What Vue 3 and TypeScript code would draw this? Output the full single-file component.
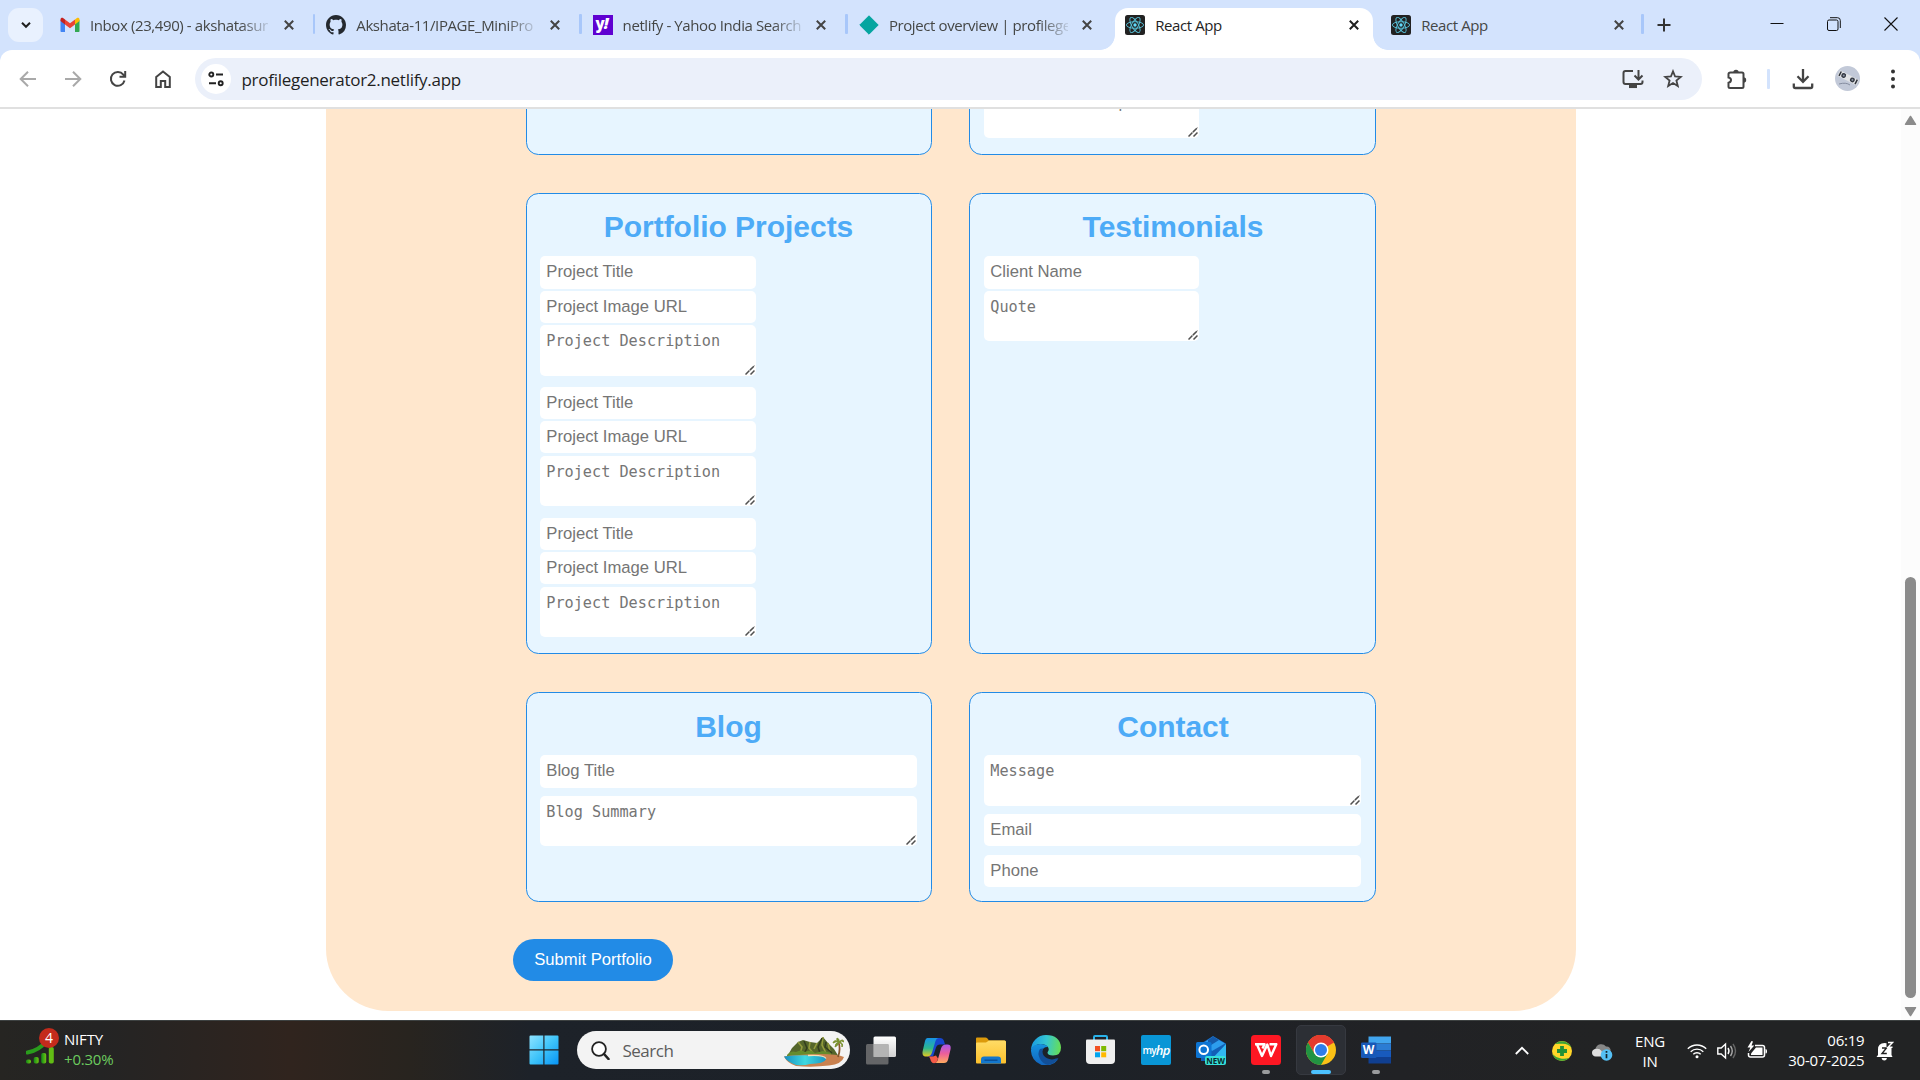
<script setup lang="ts">
interface Tab {
  title: string
  icon: 'gmail' | 'github' | 'yahoo' | 'netlify' | 'react'
  active?: boolean
  fade?: boolean
  sep?: boolean
}

const tabs: Tab[] = [
  { title: 'Inbox (23,490) - akshatasur', icon: 'gmail', fade: true, sep: true },
  { title: 'Akshata-11/IPAGE_MiniPro', icon: 'github', fade: true, sep: true },
  { title: 'netlify - Yahoo India Search', icon: 'yahoo', fade: true, sep: true },
  { title: 'Project overview | profilege', icon: 'netlify', fade: true },
  { title: 'React App', icon: 'react', active: true },
  { title: 'React App', icon: 'react', sep: true },
]

interface Field {
  label: string
  area?: boolean
}

interface Card {
  title?: string
  wide?: boolean
  height: number
  groups: Field[][]
}

const project: Field[] = [
  { label: 'Project Title' },
  { label: 'Project Image URL' },
  { label: 'Project Description', area: true },
]

const cards: Card[] = [
  { height: 461, groups: [] },
  { height: 461, groups: [[{ label: 'Service Description', area: true }]] },
  { title: 'Portfolio Projects', height: 461, groups: [project, project, project] },
  {
    title: 'Testimonials',
    height: 461,
    groups: [[{ label: 'Client Name' }, { label: 'Quote', area: true }]],
  },
  {
    title: 'Blog',
    wide: true,
    height: 210,
    groups: [[{ label: 'Blog Title' }, { label: 'Blog Summary', area: true }]],
  },
  {
    title: 'Contact',
    wide: true,
    height: 210,
    groups: [[{ label: 'Message', area: true }, { label: 'Email' }, { label: 'Phone' }]],
  },
]
</script>

<template>
  <div class="screen">
    <header class="tabstrip">
      <button class="tabsearch">
        <svg width="12" height="12" viewBox="0 0 12 12"><path d="M2 3.8 6 7.8 10 3.8" fill="none" stroke="#1f1f1f" stroke-width="2" /></svg>
      </button>
      <div v-for="(t, i) in tabs" :key="i" class="tab" :class="{ active: t.active }">
        <svg v-if="t.icon === 'gmail'" class="fav" viewBox="0 0 20 20">
          <path d="M.5 5v11.2c0 .5.4.8.8.8H5V8.500z" fill="#4285f4" />
          <path d="M15 17h3.700c.5 0 .8-.4.8-.8V5L15 8.500z" fill="#34a853" />
          <path d="M15 4.500v5l4.500-3.400V4.500c0-1.700-1.700-2.200-2.900-1.300z" fill="#fbbc04" />
          <path d="M5 9.500v-5l5 3.800 5-3.800v5l-5 3.800z" fill="#ea4335" />
          <path d="M.5 4.500v1.600L5 9.500v-5L3.400 3.200C2.200 2.300.5 2.800.5 4.500z" fill="#c5221f" />
        </svg>
        <svg v-else-if="t.icon === 'github'" class="fav" viewBox="0 0 16 16">
          <path fill="#24292f" d="M8 0C3.580 0 0 3.580 0 8c0 3.540 2.290 6.530 5.470 7.590.4.070.550-.170.550-.380 0-.190-.010-.820-.010-1.490-2.010.370-2.530-.490-2.690-.940-.090-.230-.480-.940-.820-1.130-.280-.150-.680-.520-.010-.530.630-.010 1.080.580 1.230.820.720 1.210 1.870.870 2.330.660.070-.520.280-.870.510-1.070-1.780-.2-3.640-.890-3.640-3.950 0-.870.310-1.590.820-2.150-.080-.2-.360-1.020.080-2.120 0 0 .670-.210 2.200.820.640-.180 1.320-.270 2-.270s1.360.090 2 .270c1.530-1.040 2.200-.820 2.200-.820.440 1.100.160 1.920.080 2.120.510.560.820 1.270.820 2.150 0 3.070-1.870 3.750-3.650 3.950.290.250.540.730.540 1.480 0 1.070-.010 1.930-.010 2.200 0 .210.150.460.550.380A8.010 8.010 0 0 0 16 8c0-4.420-3.580-8-8-8z" />
        </svg>
        <span v-else-if="t.icon === 'yahoo'" class="fav yahoo">y<i>!</i></span>
        <svg v-else-if="t.icon === 'netlify'" class="fav" viewBox="0 0 20 20">
          <path d="M10 .8 19.200 10 10 19.200.8 10z" fill="#05a5a0" stroke="#05a5a0" stroke-width="1" stroke-linejoin="round" />
        </svg>
        <svg v-else class="fav" viewBox="0 0 20 20">
          <rect width="20" height="20" rx="2.500" fill="#222" />
          <g fill="none" stroke="#58c4dc" stroke-width=".9">
            <ellipse cx="10" cy="10" rx="8.600" ry="3.300" />
            <ellipse cx="10" cy="10" rx="8.600" ry="3.300" transform="rotate(60 10 10)" />
            <ellipse cx="10" cy="10" rx="8.600" ry="3.300" transform="rotate(120 10 10)" />
          </g>
          <circle cx="10" cy="10" r="1.700" fill="#61dafb" />
        </svg>
        <span class="tabtitle" :class="{ fade: t.fade }">{{ t.title }}</span>
        <svg class="x" viewBox="0 0 10 10"><path d="M.8.8l8.400 8.400M9.200.8.8 9.200" /></svg>
        <i v-if="t.sep" class="tabsep"></i>
      </div>
      <svg class="plus" width="14" height="14" viewBox="0 0 14 14"><path d="M7 .5v13M.5 7h13" stroke="#333" stroke-width="2" /></svg>
      <div class="winctl">
        <svg width="14" height="14" viewBox="0 0 14 14"><path d="M.5 6.500h13" stroke="#111" /></svg>
        <svg width="14" height="14" viewBox="0 0 14 14" fill="none" stroke="#111"><rect x=".5" y="3" width="10.500" height="10.500" rx="1.500" /><path d="M3 .7h7.500q2.800 0 2.800 2.800V11" /></svg>
        <svg width="14" height="14" viewBox="0 0 14 14"><path d="M.5.5l13 13M13.500.5l-13 13" stroke="#111" stroke-width="1.100" /></svg>
      </div>
    </header>

    <div class="toolbar">
      <div class="nav">
        <svg viewBox="0 0 18 18" stroke="#a9a9a9"><path d="M17 9H2M9 1.700 1.700 9 9 16.300" /></svg>
        <svg viewBox="0 0 18 18" stroke="#a9a9a9"><path d="M1 9h15M9 1.700 16.300 9 9 16.300" /></svg>
        <svg viewBox="0 0 18 18" stroke="#444"><path d="M15.500 10.500A6.900 6.900 0 1 1 14.300 4.700L16 6.500M16.200 1v5.800h-5.700" /></svg>
        <svg viewBox="0 0 18 18" stroke="#444"><path d="M2.200 7 9 1.500 15.800 7v10h-4.600v-6H6.800v6H2.200z" /></svg>
      </div>
      <div class="omnibox">
        <span class="chip">
          <svg width="16" height="16" viewBox="0 0 16 16" fill="none" stroke="#222" stroke-width="1.900"><circle cx="3.300" cy="3.500" r="2" /><path d="M8 3.500h7M1 12.300h7" /><circle cx="12.700" cy="12.300" r="2" /></svg>
        </span>
        <span class="url">profilegenerator2.netlify.app</span>
        <svg class="install" width="22" height="20" viewBox="0 0 22 20" fill="none" stroke="#444" stroke-width="2"><path d="M11 2H3.500Q1.500 2 1.500 4v9q0 2 2 2h15q2 0 2-2v-1.500M16.500 1v9M12.500 6.500l4 4 4-4" /><path d="M7 17.300h8" stroke-width="3.500" /></svg>
        <svg width="20" height="20" viewBox="0 0 20 20" fill="none" stroke="#444" stroke-width="1.800"><path d="M10 2.300 12.100 7.500 17.700 7.900 13.400 11.500 14.800 17 10 14 5.200 17 6.600 11.500 2.300 7.900 7.900 7.500z" /></svg>
      </div>
      <div class="actions">
        <svg width="22" height="22" viewBox="0 0 22 22"><path d="M4.500 4.500H16q1.500 0 1.500 1.500v12.500q0 1.500-1.500 1.500H4q-1.500 0-1.500-1.500v-3.700q2.500-.5 2.500-2.700T2.500 9.500V6q0-1.500 2-1.500z" fill="none" stroke="#444" stroke-width="2" /><path d="M7.300 4.500a2.700 2.700 0 0 1 5.400 0zM17.500 9.300a2.700 2.700 0 0 1 0 5.400z" fill="#444" /></svg>
        <i class="divider"></i>
        <svg class="dl" width="22" height="22" viewBox="0 0 22 22" fill="none" stroke="#444" stroke-width="2.300"><path d="M11 1v12.500M5.500 8.300l5.500 5.500 5.500-5.500M1.800 15.500v3q0 1.500 1.500 1.500h15.400q1.500 0 1.500-1.500v-3" /></svg>
        <svg class="avatar" width="25" height="25" viewBox="0 0 25 25"><circle cx="12.500" cy="12.500" r="12.500" fill="#c2c9d8" /><g transform="rotate(27 12.500 12)"><rect x="2.500" y="8.500" width="21" height="6" fill="#e2e4e6" /><path d="M4 9v5M22 9v5" stroke="#30343c" stroke-width="1.500" /><circle cx="8" cy="11.500" r="2.400" fill="#343943" /><circle cx="17.700" cy="11.500" r="2.400" fill="#343943" /><circle cx="8" cy="11.500" r="1" fill="#8c94a3" /><circle cx="17.700" cy="11.500" r="1" fill="#8c94a3" /></g><path d="M4 18q7-2 11 1" stroke="#858da0" fill="none" /></svg>
        <svg class="dots" width="4" height="20" viewBox="0 0 4 20" fill="#333"><circle cx="2" cy="2.500" r="2" /><circle cx="2" cy="10" r="2" /><circle cx="2" cy="17.500" r="2" /></svg>
      </div>
    </div>

    <div class="viewport">
      <main class="sheet">
        <form class="form" @submit.prevent>
          <div class="grid">
            <section v-for="(c, ci) in cards" :key="ci" class="card" :class="{ wide: c.wide, tail: !c.title }" :style="{ height: c.height + 'px' }">
              <h2 v-if="c.title">{{ c.title }}</h2>
              <div v-for="(g, gi) in c.groups" :key="gi" class="group">
                <template v-for="f in g" :key="f.label">
                  <div v-if="f.area" class="areawrap">
                    <textarea :placeholder="f.label"></textarea>
                    <svg class="grip" width="10" height="10" viewBox="0 0 10 10"><path d="M.5 9.500l9-9M5.500 9.500l4-4" stroke="#505050" stroke-width="1.500" stroke-dasharray="5.600 .6" /></svg>
                  </div>
                  <input v-else type="text" :placeholder="f.label" />
                </template>
              </div>
            </section>
          </div>
          <button class="submit" type="submit">Submit Portfolio</button>
        </form>
      </main>
      <div class="scrollbar">
        <svg width="13" height="11" viewBox="0 0 13 11"><path d="M6.500 1.500 11.500 9.300H1.500z" fill="#8b8b8b" stroke="#8b8b8b" stroke-width="1.500" stroke-linejoin="round" /></svg>
        <i class="thumb"></i>
        <svg width="13" height="11" viewBox="0 0 13 11"><path d="M6.500 9.500 11.500 1.700H1.500z" fill="#8b8b8b" stroke="#8b8b8b" stroke-width="1.500" stroke-linejoin="round" /></svg>
      </div>
    </div>

    <footer class="taskbar">
      <div class="widget">
        <div class="stock">
          <svg width="30" height="34" viewBox="0 0 30 34">
            <defs><linearGradient id="gr" x1="0" x2="1"><stop offset="0" stop-color="#128a17" /><stop offset="1" stop-color="#70c414" /></linearGradient></defs>
            <path d="M1.500 20.500Q13 18.500 20 9.500" stroke="#2a9c1c" stroke-width="4" fill="none" stroke-linecap="round" />
            <g fill="url(#gr)"><rect x="0" y="27.500" width="5" height="4" rx="1.800" /><rect x="7.700" y="25" width="5" height="6.500" rx="1.800" /><rect x="15.200" y="21" width="5" height="10.500" rx="1.800" /><rect x="22.800" y="15" width="5" height="16.500" rx="1.800" fill="#62bd14" /></g>
          </svg>
          <span class="badge">4</span>
        </div>
        <div class="quote"><span>NIFTY</span><span class="up">+0.30%</span></div>
      </div>

      <div class="dock">
        <div class="cell">
          <svg width="30" height="30" viewBox="0 0 30 30"><defs><linearGradient id="win" x1="0" y1="0" x2="1" y2="1"><stop offset="0" stop-color="#8ee3ff" /><stop offset=".5" stop-color="#3fc4fa" /><stop offset="1" stop-color="#0794f5" /></linearGradient></defs><path fill="url(#win)" d="M.5 1.500q0-1 1-1h12.800v13.800H.5zM15.500.5h13q1 0 1 1v12.800h-14zM.5 15.500h13.800v14H1.500q-1 0-1-1zM15.500 15.500h14v13q0 1-1 1h-13z" /></svg>
        </div>
        <div class="search">
          <svg width="19" height="19" viewBox="0 0 19 19" fill="none"><circle cx="8" cy="8" r="6.900" fill="#fff" stroke="#222" stroke-width="1.800" /><path d="M13 13l4.500 5" stroke="#222" stroke-width="2.600" stroke-linecap="round" /></svg>
          <span>Search</span>
          <svg class="island" width="60" height="30" viewBox="0 0 60 30">
            <defs><linearGradient id="sea" x1="0" x2="1"><stop offset="0" stop-color="#168fc0" /><stop offset=".5" stop-color="#3fd9e0" /><stop offset="1" stop-color="#1c97c4" /></linearGradient></defs>
            <path d="M4 18 8 11 14 5l5-2 7 2 7 1 6-6 5 6 6 6 5 8z" fill="#55662b" />
            <path d="M14 5l4 5-2 7M26 5l-1 6 4 5M39 0l-1 8 4 8M33 6l-3 6M44 6l2 9" stroke="#939b3d" stroke-width="1.600" fill="none" />
            <path d="M20 4l3 7-3 6M38 1l-4 9 2 6M42 5l-1 5 7 6" stroke="#333d1e" stroke-width="1.500" fill="none" />
            <path d="M3 18q4-5 9-3 5-3 9 0 6-3 10 1l8-2 8 2v3H3z" fill="#668b2c" />
            <path d="M0 19.500q12-2 36-2.500 18 0 24 3-2 7-15 8.500-16 2-33 .5Q3 26 0 19.500z" fill="#c9814f" />
            <path d="M0 19.500q12-1.700 30-1 13 0 12 4-2 4-16 4.500-6 2-14 1Q3 25 0 19.500z" fill="url(#sea)" />
            <path d="M24 18.500q16-1 18 3" stroke="#f7e0b5" stroke-width="1.300" fill="none" />
            <path d="M54 20Q57 12 54.500 5" stroke="#87572c" stroke-width="1.800" fill="none" />
            <path d="M55 5q-5-3-6 1 3-2 6-1-4 1-4 5 3-1 4-5 4 2 3 5 2-4-3-5 3-2 5 0-1-4-5 0 1-3-2-4-1 3 2 4z" fill="#7b9130" stroke="#7b9130" />
          </svg>
        </div>
        <div class="cell">
          <svg width="30" height="29" viewBox="0 0 30 29"><defs><linearGradient id="tv" x1="0" y1="0" x2="0" y2="1"><stop offset="0" stop-color="#fff" /><stop offset="1" stop-color="#d2d2d2" /></linearGradient></defs><rect x="7.500" y=".5" width="22.500" height="20.500" rx="1.500" fill="url(#tv)" /><rect x="0" y="8" width="22.500" height="20.500" rx="1.500" fill="#777" fill-opacity=".8" /><path d="M7.500 8h15v13h-15z" fill="#b4b4b4" /></svg>
        </div>
        <div class="cell">
          <svg width="29" height="27" viewBox="0 0 29 27">
            <defs><linearGradient id="c1" x1="0" y1="0" x2="0" y2="1"><stop offset="0" stop-color="#1793e8" /><stop offset=".55" stop-color="#2cb890" /><stop offset="1" stop-color="#e5c91d" /></linearGradient><linearGradient id="c2" x1="0" y1="0" x2="0" y2="1"><stop offset="0" stop-color="#a957ed" /><stop offset=".5" stop-color="#ed5f99" /><stop offset="1" stop-color="#ffab5f" /></linearGradient></defs>
            <path d="M13 1h5q3 0 4 3l1 3.500h-5q-3 0-4 3l-3 9H5l6-15z" fill="#1746cf" />
            <path d="M5.500 1H17q-2.500 0-3.500 3L10 15.500Q8.800 19.500 5 19.500H3.500Q-.3 19 .7 14L3 4Q3.700 1 5.500 1z" fill="url(#c1)" />
            <path d="M24 7.500h1.500q4 0 3 5l-2.400 10q-.9 3.500-4.100 3.500H12q2.800 0 3.700-3L19 11.500q1.200-4 5-4z" fill="url(#c2)" />
            <path d="M6 19.500h5l3-1 2 3-1 3q-1 1.800-3 1.800t-3-2l-1-3q-.5-1.800-2-1.800z" fill="#f45a48" />
          </svg>
        </div>
        <div class="cell">
          <svg width="30" height="27" viewBox="0 0 30 27"><defs><linearGradient id="fo" x1="0" y1="0" x2="0" y2="1"><stop offset="0" stop-color="#ffdc66" /><stop offset="1" stop-color="#fcc02c" /></linearGradient></defs><path d="M0 1.500Q0 .5 1 .5h8.500q1 0 2 1L13 3.500h15.500Q30 3.500 30 5v8H0z" fill="#dc9a0b" /><path d="M0 6.500Q0 5.500 1 5.500h9l3-2h15.500Q30 3.500 30 5v20.500q0 1-1 1H1q-1 0-1-1z" fill="url(#fo)" /><path d="M5 26.500v-4q0-3 3-3h14q3 0 3 3v4z" fill="#1377cd" /><path d="M8.500 23.200h13" stroke="#0a4b91" stroke-width="1.300" /></svg>
        </div>
        <div class="cell">
          <svg width="30" height="30" viewBox="0 0 30 30">
            <defs><linearGradient id="e1" x1="0" y1=".4" x2="1" y2=".5"><stop offset="0" stop-color="#199be2" /><stop offset=".5" stop-color="#35c6d1" /><stop offset="1" stop-color="#67de54" /></linearGradient><linearGradient id="e2" x1="0" y1="0" x2="0" y2="1"><stop offset="0" stop-color="#1593df" /><stop offset="1" stop-color="#1264bd" /></linearGradient></defs>
            <path d="M0 15A15 15 0 0 1 15 0q14 0 15 12.500 0 8-8 8-5.500 0-5.500-3 2-2 1-4.500-2-4-8-4Q3 9.500 0 15z" fill="url(#e1)" />
            <path d="M0 15q1.500-6 9.500-6 5 0 7.500 3-4.500-.5-6 4-1 6 5 9.500 5 2.500 11-1A15 15 0 0 1 0 15z" fill="url(#e2)" />
            <path d="M9 14q-3 4 0 10 3 5 8 6 6-1 10.500-6.500-1-.5-5 .8-6.500.7-10-4-2-3.300 0-7z" fill="#124f98" />
          </svg>
        </div>
        <div class="cell">
          <svg class="store" width="29" height="30" viewBox="0 0 29 30"><path d="M8 6V2q0-1 1-1h11q1 0 1 1v4" fill="none" stroke="#29b2e9" stroke-width="2" /><path d="M0 5.500Q0 4.500 1 4.500h27q1 0 1 1V25q0 4-4 4H4q-4 0-4-4z" fill="#efefef" /><path d="M9 11h5v5.200H9z" fill="#f25022" /><path d="M15.200 11h5v5.200h-5z" fill="#7fba00" /><path d="M9 17.300h5v5H9z" fill="#00a4ef" /><path d="M15.200 17.300h5v5h-5z" fill="#ffb900" /></svg>
        </div>
        <div class="cell"><span class="hp"><span>my</span>hp</span></div>
        <div class="cell">
          <div class="outlook">
            <svg width="30" height="28" viewBox="0 0 30 28"><path d="M5 7.500 17 0l13 7.500V25H5z" fill="#125fb6" /><path d="M8 6.500 17 .5l12 7L16 15z" fill="#2d9ded" /><path d="M12 4 17 .5l6 3.500-11 7z" fill="#155aa9" /><path d="M30 8v17H14z" fill="#31b8f2" /><rect x="0" y="6" width="15.500" height="16" rx="1.500" fill="#0d74d2" /><circle cx="7.700" cy="13.700" r="4.300" fill="none" stroke="#fff" stroke-width="2" /></svg>
            <span class="new">NEW</span>
          </div>
        </div>
        <div class="cell">
          <svg width="30" height="30" viewBox="0 0 30 30"><rect width="30" height="30" rx="3.500" fill="#fd1723" /><path d="M4 9.200h9.500l-2 4.300M6 9.500l5 11.500 5.300-11.500 3.700 11.500 5.300-11.800H18.500" fill="none" stroke="#fff" stroke-width="2.400" stroke-linejoin="round" /></svg>
          <i class="ind"></i>
        </div>
        <div class="cell on">
          <svg width="30" height="30" viewBox="0 0 30 30"><circle cx="15" cy="15" r="15" fill="#fbc116" /><path d="M15 15 2 7.500A15 15 0 0 1 28 7.500z" fill="#e33b2e" /><path d="M15 7.500h13A15 15 0 0 0 2 7.500l6.500 11.300z" fill="#e33b2e" /><path d="M2 7.500A15 15 0 0 0 15 30l6.500-11.200H8.500z" fill="#229342" /><circle cx="15" cy="15" r="7.500" fill="#fff" /><circle cx="15" cy="15" r="6" fill="#2f7de9" /></svg>
          <i class="ind"></i>
        </div>
        <div class="cell">
          <div class="word">
            <svg width="30" height="28" viewBox="0 0 30 28"><path d="M7.500.5H30V7.500H7.500z" fill="#41a5ee" /><path d="M7.500 7.500H30v7H7.500z" fill="#2b7cd3" /><path d="M7.500 14.500H30v6.500H7.500z" fill="#185abd" /><path d="M7.500 21H30v6.500H7.500z" fill="#103f91" /><rect x="0" y="6.500" width="15.500" height="15.500" rx="1.300" fill="#1859b8" /></svg>
            <b>W</b>
          </div>
          <i class="ind"></i>
        </div>
      </div>

      <div class="tray">
        <svg class="chev" width="14" height="9" viewBox="0 0 14 9"><path d="M.8 8 7 1.800 13.200 8" fill="none" stroke="#fff" stroke-width="1.800" /></svg>
        <svg class="shield" width="20" height="20" viewBox="0 0 20 20"><circle cx="10" cy="10" r="10" fill="#ffd629" /><path d="M3 3A10 10 0 0 1 19.500 7Q16 2.500 10 2.800 6 2.500 3 3zM.5 13A10 10 0 0 0 17 17Q12 18.500 8 17.200 3 16 .5 13z" fill="#39a437" /><path d="M10 5v10M5 10h10" stroke="#219136" stroke-width="3.800" /></svg>
        <svg class="cloud" width="21" height="18" viewBox="0 0 21 18"><path d="M4 13a4 4 0 0 1-.5-7.500A6 6 0 0 1 14 3.500a4 4 0 0 1 4.500 5V13z" fill="#878787" /><path d="M3.800 13.500Q0 13 0 9.700 0 6.500 3.500 6q4-1 6 2l2 5.500z" fill="#dedede" /><circle cx="14.500" cy="12" r="5.800" fill="#55c0f5" /><path d="M14.500 11v4.300M14.500 8v1.700" stroke="#12252f" stroke-width="1.700" /></svg>
        <div class="lang"><span>ENG</span><span>IN</span></div>
        <svg class="wifi" width="20" height="16" viewBox="0 0 20 16" fill="none" stroke="#fff" stroke-width="1.400"><path d="M.8 5.800a13 13 0 0 1 18.400 0M3.700 8.700a9 9 0 0 1 12.600 0M6.300 11.300a5.200 5.200 0 0 1 7.400 0" /><circle cx="10" cy="13.800" r="1.500" fill="#fff" stroke="none" /></svg>
        <svg class="vol" width="20" height="18" viewBox="0 0 20 18" fill="none" stroke="#fff" stroke-width="1.400"><path d="M.8 6h3.400L8.500 2v14L4.200 12H.8zM11 6q2 3 0 6" /><path d="M13.500 4q3.500 5 0 10" stroke="#aaa" /><path d="M16 2q5 7 0 14" stroke="#666" /></svg>
        <svg class="bat" width="21" height="18" viewBox="0 0 21 18"><path d="M8 4.500h7.500q2 0 2 2V14q0 2-2 2h-12q-2 0-2-2v-2" fill="none" stroke="#fff" stroke-width="1.500" /><path d="M9 6.500h6.500v7.500H4v-1.500z" fill="#fff" /><path d="M18.500 8q1.500 0 1.500 1.500v1.500q0 1.500-1.500 1.500z" fill="#fff" /><path d="M4.500 0 .5 6.500h2.800L1.500 11 7.300 4.500H4.500L6 .5z" fill="#fff" /></svg>
        <div class="clock"><span>06:19</span><span>30-07-2025</span></div>
        <svg class="bell" width="18" height="20" viewBox="0 0 18 20"><path d="M2 14V8.500q0-6.500 6.500-6.500l2 .3v3.700h5V14l1 2H.5z" fill="#fff" /><path d="M5.500 17h5.500q-.5 2.500-2.700 2.500T5.500 17z" fill="#fff" /><path d="M6 7h4.500L6 12.500h4.800" stroke="#222" stroke-width="1.400" fill="none" /><path d="M12 1.500h4.500L12 6.300h4.500" stroke="#fff" stroke-width="1.400" fill="none" /></svg>
      </div>
    </footer>
  </div>
</template>

<style>
html,
body {
  margin: 0;
  overflow: hidden;
}
</style>

<style scoped>
* {
  box-sizing: border-box;
}
.screen {
  width: 1920px;
  height: 1080px;
  display: flex;
  flex-direction: column;
  background: #fff;
  font-family: 'Open Sans', 'Noto Sans', sans-serif;
  overflow: hidden;
}
svg {
  display: block;
  flex: none;
}
button {
  border: 0;
  padding: 0;
}

.tabstrip {
  height: 62px;
  margin-bottom: -12px;
  flex: none;
  display: flex;
  align-items: flex-start;
  background: #d3e3fd;
  padding-left: 8px;
}
.tabsearch {
  width: 35px;
  height: 34px;
  margin: 8px 7px 0 0;
  border-radius: 11px;
  background: #e9f1fe;
  display: flex;
  align-items: center;
  justify-content: center;
}
.tab {
  position: relative;
  width: 266.3px;
  height: 50px;
  padding-left: 10px;
  display: flex;
  align-items: center;
  flex: none;
}
.tab:nth-of-type(6) {
  width: 263.600px;
}
.tab:nth-of-type(6) .x {
  margin-left: 13.500px;
}
.fav {
  width: 20px;
  height: 20px;
  flex: none;
}
.yahoo {
  background: #5f01d1;
  color: #fff;
  font: 800 15px/16px 'Open Sans', sans-serif;
  letter-spacing: -1px;
  padding-left: 3px;
}
.yahoo i {
  font-size: 16px;
}
.tabtitle {
  width: 179px;
  margin-left: 10px;
  font-size: 15px;
  letter-spacing: -0.4px;
  color: #454746;
  white-space: nowrap;
}
.fade {
  mask-image: linear-gradient(90deg, #000 150px, rgba(0, 0, 0, 0.15) 179px);
}
.x {
  width: 10px;
  height: 10px;
  margin-left: 14.500px;
}
.x path {
  stroke: #444;
  stroke-width: 2;
}
.tabsep {
  position: absolute;
  right: 1px;
  top: 14px;
  width: 2.500px;
  height: 20px;
  background: #a8c7fa;
  border-radius: 1px;
}
.tab.active {
  width: 258px;
  margin-right: 8px;
}
.tab.active::before {
  content: '';
  position: absolute;
  z-index: 0;
  inset: 7.500px 0 0 0;
  background: #fff;
  border-radius: 13px 13px 0 0;
}
.tab.active::after {
  content: '';
  position: absolute;
  left: -15px;
  right: -15px;
  bottom: 0;
  height: 15px;
  background:
    radial-gradient(circle at 0 0, transparent 14.500px, #fff 15.200px) left / 15px 15px no-repeat,
    radial-gradient(circle at 100% 0, transparent 14.500px, #fff 15.200px) right / 15px 15px no-repeat;
}
.tab.active > * {
  position: relative;
  z-index: 1;
}
.tab.active .tabtitle {
  color: #1f1f1f;
}
.tab.active .x path {
  stroke: #1f1f1f;
}
.plus {
  margin: 18px 0 0 12.500px;
}
.winctl {
  margin: 17px 22px 0 auto;
  display: flex;
  gap: 43px;
}

.toolbar {
  position: relative;
  height: 59px;
  flex: none;
  display: flex;
  align-items: center;
  background: #fff;
  border-radius: 12px 12px 0 0;
  border-bottom: 2px solid #e0e0e0;
}
.nav {
  display: flex;
  width: 195px;
  padding-left: 18.500px;
  gap: 27px;
}
.nav svg {
  width: 18px;
  height: 18px;
  fill: none;
  stroke-width: 2;
}
.omnibox {
  width: 1507px;
  height: 42px;
  margin-top: 1px;
  border-radius: 21px;
  background: #ebf0fa;
  display: flex;
  align-items: center;
  padding: 0 19.500px 0 6px;
}
.chip {
  width: 30px;
  height: 30px;
  border-radius: 50%;
  background: #fff;
  display: flex;
  align-items: center;
  justify-content: center;
}
.url {
  margin-left: 10.500px;
  font-size: 17px;
  letter-spacing: -0.28px;
  color: #1f1f1f;
}
.install {
  margin: 0 18.500px 0 auto;
}
.actions {
  display: flex;
  align-items: center;
  margin-left: 24px;
}
.divider {
  width: 2.500px;
  height: 20px;
  margin: 0 22px 0 19px;
  background: #d3e3fd;
  border-radius: 1px;
}
.avatar {
  margin: 0 30.500px 0 21.500px;
}

.viewport {
  height: 911px;
  flex: none;
  display: flex;
  justify-content: space-between;
  overflow: hidden;
}
.sheet {
  width: 1250px;
  height: 1400px;
  margin: -498px 0 0 326px;
  padding: 83px 0 0 187px;
  background: #ffe7cd;
  border-radius: 62.500px;
}
.grid {
  display: grid;
  grid-template-columns: 406px 407px;
  gap: 38px 37px;
  padding-left: 13px;
}
.card {
  border: 1px solid #228be6;
  border-radius: 12.500px;
  background: #e7f5ff;
  padding: 12.500px 13px;
  overflow: hidden;
}
.card:nth-child(even) {
  padding-left: 14px;
}
.card.tail {
  display: flex;
  flex-direction: column;
  justify-content: flex-end;
}
.card.tail .group {
  margin-bottom: 4px;
}
.card h2 {
  margin: 0 1px 10.300px 0;
  font: bold 30px/39.200px 'Liberation Sans', Arial, sans-serif;
  letter-spacing: -0.03px;
  color: #4dabf7;
  text-align: center;
}
.card:nth-child(even) h2 {
  margin-right: 0;
}
.card.wide h2 {
  margin-bottom: 8.300px;
  line-height: 41.200px;
}
.group {
  width: 216px;
  display: flex;
  flex-direction: column;
  gap: 2px;
  margin-bottom: 11.300px;
}
.card:nth-child(even):not(.wide) .group {
  width: 215px;
}
.wide .group {
  width: 377px;
  gap: 8.400px;
}
input,
textarea {
  display: block;
  width: 100%;
  height: 32.500px;
  margin: 0;
  padding: 0 6.300px;
  border: 0;
  border-radius: 5px;
  background: #fff;
  font: 16.670px 'Liberation Sans', Arial, sans-serif;
  outline: 0;
}
.group + .group input + input {
  margin: -0.700px 0 0.700px;
}
textarea {
  height: 50.600px;
  padding-top: 7px;
  resize: none;
  font: 15.200px/19px 'DejaVu Sans Mono', monospace;
  overflow: hidden;
}
::placeholder {
  color: #757575;
  opacity: 1;
}
.areawrap {
  position: relative;
}
.grip {
  position: absolute;
  right: 1.500px;
  bottom: 1px;
}
.submit {
  display: block;
  width: 160px;
  height: 42px;
  margin-top: 37px;
  border-radius: 21px;
  background: #228be6;
  color: #fff;
  font: 16.670px 'Liberation Sans', Arial, sans-serif;
}
.scrollbar {
  width: 19px;
  background: #fcfcfc;
  display: flex;
  flex-direction: column;
  align-items: center;
  padding: 6px 0 3px;
}
.thumb {
  width: 11px;
  height: 421px;
  margin: auto 0 8px;
  border-radius: 6px;
  background: #8b8b8b;
}

.taskbar {
  height: 60px;
  flex: none;
  display: flex;
  color: #fff;
  font-size: 15px;
  border-top: 1px solid #3d4141;
  background: linear-gradient(90deg, #262522 0, #242424 100px, #30241e 290px, #28241f 410px, #1d2229 530px, #1c2128 1000px, #212225 1400px, #222324 1600px);
}
.widget {
  width: 519px;
  padding: 5px 0 0 26px;
  display: flex;
}
.stock {
  position: relative;
  width: 38px;
  padding-top: 6px;
}
.badge {
  position: absolute;
  left: 13px;
  top: 2px;
  width: 20px;
  height: 20px;
  border-radius: 50%;
  background: #c42b1c;
  font-size: 14px;
  line-height: 20px;
  text-align: center;
}
.quote,
.lang,
.clock {
  display: flex;
  flex-direction: column;
  line-height: 20px;
  letter-spacing: -0.2px;
}
.quote {
  padding-top: 2.500px;
}
.up {
  color: #6ccb5f;
}
.dock {
  display: flex;
  gap: 5px;
  padding-top: 4px;
}
.cell {
  position: relative;
  width: 50px;
  height: 50px;
  display: flex;
  align-items: center;
  justify-content: center;
  border-radius: 5px;
}
.cell.on {
  background: #2c2f35;
  border: 1px solid #363940;
}
.store {
  margin-right: 1px;
}
.ind {
  position: absolute;
  bottom: 1px;
  width: 8px;
  height: 4px;
  border-radius: 2px;
  background: #9a9b9d;
}
.on .ind {
  bottom: 0;
  width: 20px;
  background: #4cc2ff;
}
.search {
  width: 273px;
  height: 38px;
  margin: 6px 1px 0 3px;
  padding: 0 6px 0 14px;
  border-radius: 19px;
  background: #f3f3f3;
  display: flex;
  align-items: center;
  color: #5c5c5c;
  font-size: 17px;
  letter-spacing: -0.5px;
}
.search span {
  margin-left: 12.500px;
}
.island {
  margin: 3px 0 0 auto;
}
.hp {
  width: 30px;
  height: 30px;
  background: #0996d6;
  border-radius: 2px;
  display: flex;
  justify-content: center;
  align-items: center;
  font: italic 600 13px 'Open Sans', sans-serif;
  letter-spacing: -0.8px;
}
.hp span {
  font-size: 10px;
  font-style: normal;
}
.outlook,
.word {
  position: relative;
}
.new {
  position: absolute;
  right: 0;
  bottom: -1px;
  width: 21px;
  height: 9px;
  border-radius: 2px;
  background: #35e0da;
  color: #0b2a2a;
  font: bold 8px/9px 'Open Sans', sans-serif;
  text-align: center;
}
.word b {
  position: absolute;
  left: 0;
  top: 6px;
  width: 15px;
  font: bold 12px/16px 'Open Sans', sans-serif;
  text-align: center;
}
.tray {
  margin-left: auto;
  display: flex;
  align-items: center;
  padding-right: 26px;
}
.shield {
  margin-left: 23px;
}
.cloud {
  margin: 2px 0 0 20px;
}
.lang {
  width: 32px;
  margin: 0 0 0 21px;
  align-items: center;
}
.wifi {
  margin-left: 21px;
}
.vol {
  margin-left: 10px;
}
.bat {
  margin: -2px 0 0 10px;
}
.clock {
  width: 78px;
  margin: -2px 0 0 18.500px;
  align-items: flex-end;
}
.bell {
  margin-left: 11.500px;
}
</style>
